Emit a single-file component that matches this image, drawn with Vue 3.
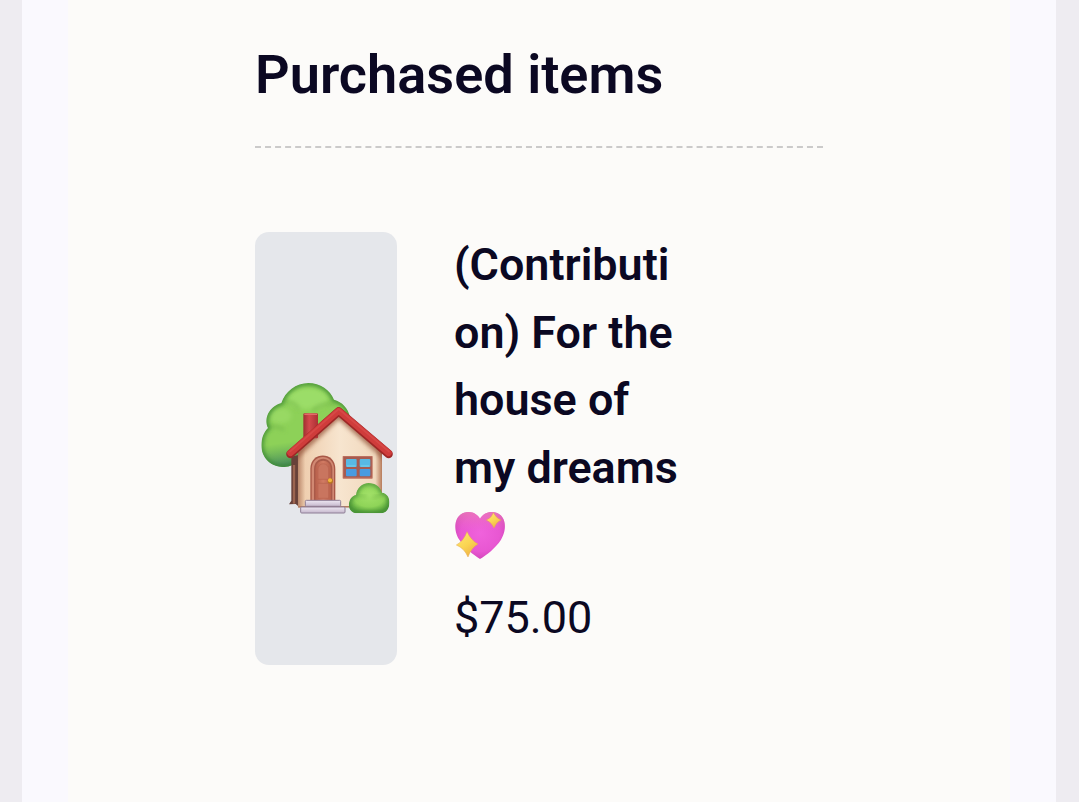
<template>
  <div class="page">
    <div class="sheet">
      <main class="receipt">
        <h1 class="title">Purchased items</h1>
        <div class="item">
          <div class="thumb">
            <svg class="house" viewBox="15 0 426 435" role="img" aria-label="House with garden">
              <defs>
                <radialGradient id="leaf" cx="0.5" cy="0.4" r="0.6">
                  <stop offset="0" stop-color="#a2e168" />
                  <stop offset="0.65" stop-color="#8fd458" />
                  <stop offset="1" stop-color="#55a23a" />
                </radialGradient>
                <linearGradient id="leafShade" x1="0.35" y1="0" x2="0.5" y2="1">
                  <stop offset="0.68" stop-color="#4d9a55" stop-opacity="0" />
                  <stop offset="0.95" stop-color="#3d8060" stop-opacity="0.9" />
                </linearGradient>
                <linearGradient id="wall" x1="0" y1="0" x2="1" y2="0">
                  <stop offset="0" stop-color="#b98568" />
                  <stop offset="0.09" stop-color="#efcfb0" />
                  <stop offset="0.5" stop-color="#f7e5cf" />
                  <stop offset="0.92" stop-color="#f1d8bd" />
                  <stop offset="1" stop-color="#b77c5c" />
                </linearGradient>
                <linearGradient id="chimney" x1="0" y1="0" x2="1" y2="0">
                  <stop offset="0" stop-color="#9f2f30" />
                  <stop offset="0.4" stop-color="#d4494c" />
                  <stop offset="1" stop-color="#ab3034" />
                </linearGradient>
                <linearGradient id="door" x1="0" y1="0" x2="1" y2="0">
                  <stop offset="0" stop-color="#b8604b" />
                  <stop offset="0.5" stop-color="#d17b63" />
                  <stop offset="1" stop-color="#b9614b" />
                </linearGradient>
                <linearGradient id="step" x1="0" y1="0" x2="0" y2="1">
                  <stop offset="0" stop-color="#eee7f2" />
                  <stop offset="1" stop-color="#c5b7cc" />
                </linearGradient>
                <filter id="soft" x="-20%" y="-20%" width="140%" height="140%">
                  <feGaussianBlur stdDeviation="6" />
                </filter>
                <clipPath id="treeClip">
                  <path :d="tree" />
                </clipPath>
                <clipPath id="wallClip">
                  <path :d="wall" />
                </clipPath>
                <clipPath id="bushClip">
                  <path :d="bush" />
                </clipPath>
              </defs>

              <!-- tree -->
              <g clip-path="url(#treeClip)">
                <path :d="tree" fill="#8dd158" />
                <ellipse cx="173" cy="70" rx="62" ry="32" fill="#9bdd68" filter="url(#soft)" />
                <ellipse cx="90" cy="122" rx="34" ry="24" fill="#98d964" filter="url(#soft)" />
                <path d="M50 158Q78 148 103 165M99 82Q133 75 147 103M187 107Q212 83 259 86" fill="none" stroke="#74b84a" stroke-width="6" filter="url(#soft)" />
                <path :d="tree" fill="url(#leafShade)" />
                <path :d="tree" fill="none" stroke="#3d8a33" stroke-width="12" filter="url(#soft)" />
              </g>

              <!-- walls -->
              <path d="M124 245L145 240V394L137 387L117 388L124 377Z" fill="#674139" />
              <path d="M132 270V386" stroke="#9c6550" stroke-width="7" />
              <g clip-path="url(#wallClip)">
                <path :d="wall" fill="url(#wall)" />
                <path d="M125 250L266 117L413 249" fill="none" stroke="#9b5f45" stroke-width="24" filter="url(#soft)" opacity="0.8" />
                <path d="M145 397H395" stroke="#b27c61" stroke-width="8" />
              </g>
              <rect x="160" y="115" width="44" height="75" rx="4" fill="url(#chimney)" />
              <path d="M163 118H201" stroke="#e4686a" stroke-width="4" />
              <path d="M121 237L266 109L416 237" fill="none" stroke="#9e2726" stroke-width="25" stroke-linecap="round" stroke-linejoin="round" />
              <path d="M121 234L266 107L416 234" fill="none" stroke="#cf3c3b" stroke-width="19" stroke-linecap="round" stroke-linejoin="round" />
              <path d="M120 230L266 102L417 230" fill="none" stroke="#dc504e" stroke-width="5" stroke-linecap="round" stroke-linejoin="round" opacity="0.6" />

              <!-- door -->
              <path d="M181 376V281C181 228 256 228 256 281V376Z" fill="#a85746" />
              <path d="M185 376V282C185 234 252 234 252 282V376Z" fill="#d18872" />
              <path d="M192 376V283C192 241 247 241 247 283V376Z" fill="#a95a49" />
              <path d="M196 376V284C196 248 243 248 243 284V376Z" fill="url(#door)" />
              <path d="M204 313V285C204 260 236 260 236 285V313ZM204 325H236V370H204Z" fill="#c9755f" stroke="#b8624f" stroke-width="2" />
              <circle cx="241" cy="318" r="8" fill="#b87520" />
              <circle cx="240" cy="316" r="6" fill="#f3b540" />

              <!-- window -->
              <rect x="278" y="243" width="90" height="68" rx="2" fill="#bd6f5e" />
              <rect x="281" y="246" width="84" height="61" fill="#a65b50" />
              <rect x="288" y="252" width="32" height="24" rx="3" fill="#58b9e3" />
              <rect x="329" y="252" width="32" height="24" rx="3" fill="#58b9e3" />
              <rect x="288" y="282" width="32" height="22" rx="3" fill="#489be0" />
              <rect x="329" y="282" width="32" height="22" rx="3" fill="#489be0" />
              <path d="M291 273H317M332 273H358" stroke="#79d2ed" stroke-width="3" />

              <!-- doorstep -->
              <rect x="166" y="376" width="106" height="18" rx="3" fill="url(#step)" stroke="#8e7e96" stroke-width="3" />
              <rect x="152" y="396" width="133" height="18" rx="3" fill="url(#step)" stroke="#8e7e96" stroke-width="3" />

              <!-- bush -->
              <g clip-path="url(#bushClip)">
                <path :d="bush" fill="url(#leaf)" />
                <path d="M323 363Q337 357 350 369M369 371Q383 357 399 363" fill="none" stroke="#74b548" stroke-width="5" filter="url(#soft)" />
                <path :d="bush" fill="none" stroke="#3d8733" stroke-width="9" filter="url(#soft)" />
              </g>
            </svg>
          </div>
          <div class="details">
            <p class="name">
              (Contributi<br />on) For the<br />house of<br />my dreams<br />
              <svg class="heart" viewBox="0 0 210 210" role="img" aria-label="Sparkling heart">
                <defs>
                  <radialGradient id="pink" cx="0.5" cy="0.45" r="0.65">
                    <stop offset="0" stop-color="#f062dc" />
                    <stop offset="0.6" stop-color="#e857d2" />
                    <stop offset="1" stop-color="#c83cae" />
                  </radialGradient>
                  <linearGradient id="pinkTop" x1="0" y1="0" x2="0" y2="1">
                    <stop offset="0" stop-color="#ec7db6" stop-opacity="0.8" />
                    <stop offset="0.4" stop-color="#ed6dc7" stop-opacity="0" />
                  </linearGradient>
                  <linearGradient id="gold" x1="0" y1="0" x2="0.6" y2="1">
                    <stop offset="0" stop-color="#ffe971" />
                    <stop offset="0.6" stop-color="#fad452" />
                    <stop offset="1" stop-color="#efb346" />
                  </linearGradient>
                </defs>
                <path :d="heart" fill="url(#pink)" />
                <path :d="heart" fill="url(#pinkTop)" />
                <path d="M145 38Q153 54 168 60Q153 67 147 84Q140 67 124 60Q140 54 145 38Z" fill="url(#gold)" stroke="#e4a850" stroke-width="1.5" />
                <path d="M66 95Q78 121 99 132Q79 143 69 171Q58 145 34 135Q56 123 66 95Z" fill="url(#gold)" stroke="#e4a850" stroke-width="1.5" />
              </svg>
            </p>
            <p class="price">$75.00</p>
          </div>
        </div>
      </main>
    </div>
  </div>
</template>

<script setup>
// outlines used both as fills and as clip paths
const tree = 'M103 276C65 278 34 250 34 211C34 189 42 170 54 159C41 133 55 95 94 84C105 50 138 24 175 24C211 24 241 45 252 74C277 81 294 99 300 125L300 200L145 255Q130 275 103 276Z'
const wall = 'M143 225L266 112L396 225V398H143Z'
const bush = 'M318 415C303 413 295 401 297 385C299 371 307 362 318 360C320 339 336 324 356 324C377 324 391 336 396 353C411 355 419 367 418 384C418 402 409 413 394 415Z'
const heart = 'M105 177C85 164 58 143 43 119C24 90 27 48 57 38C78 31 97 41 105 56C114 41 133 32 154 38C184 48 187 89 168 119C151 145 125 165 105 177Z'
</script>

<style scoped>
.page {
  box-sizing: border-box;
  height: 802px;
  padding: 0 23px 0 22px;
  background: #eeecf1;
}

.sheet {
  box-sizing: border-box;
  height: 100%;
  padding: 0 46px;
  background: #faf9fe;
}

.receipt {
  box-sizing: border-box;
  height: 100%;
  padding: 35px 187px 0;
  background: #fcfbf9;
  color: #0b0822;
  font-family: Roboto, sans-serif;
}

.title {
  margin: 0;
  padding-bottom: 31px;
  border-bottom: 2px dashed #cbcaca;
  font-size: 54.1px;
  font-weight: 600;
  line-height: 80px;
}

.item {
  display: flex;
  gap: 57px;
  margin-top: 84px;
}

.thumb {
  display: flex;
  flex-shrink: 0;
  align-items: center;
  justify-content: center;
  width: 142px;
  height: 433px;
  border-radius: 14px;
  background: #e5e7eb;
}

.house {
  display: block;
  width: 142px;
  height: 145px;
  margin-bottom: 2px;
}

.details {
  width: 227px;
  margin-top: -1px;
  font-size: 45px;
  line-height: 67.5px;
}

.name {
  height: 338px;
  margin: 0;
  font-size: 44.9px;
  font-weight: 600;
}

.heart {
  display: block;
  width: 70px;
  height: 70px;
  margin: -1px 0 0 -9px;
}

.price {
  margin: 15px 0 0;
}
</style>

<style>
body {
  margin: 0;
  overflow: hidden;
}
</style>
